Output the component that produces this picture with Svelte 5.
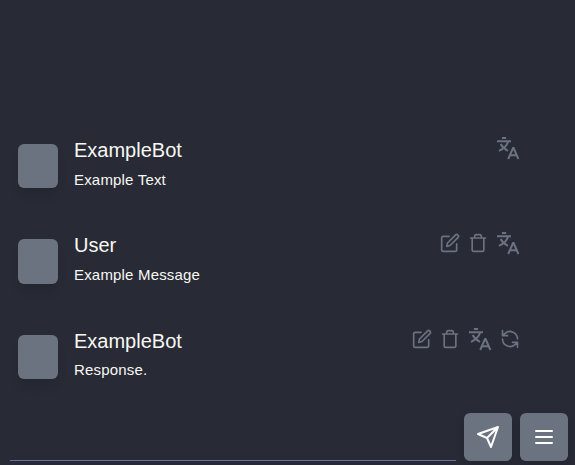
<script>
  const messages = [
    { name: 'ExampleBot', text: 'Example Text', actions: ['translate'] },
    { name: 'User', text: 'Example Message', actions: ['edit', 'trash', 'translate'] },
    { name: 'ExampleBot', text: 'Response.', actions: ['edit', 'trash', 'translate', 'refresh'] }
  ];
</script>

<main class="chat">
  <section class="messages">
    {#each messages as message}
      <article class="message">
        <div class="avatar"></div>
        <div class="content">
          <header>
            <span class="name">{message.name}</span>
            <div class="actions">
              {#each message.actions as action}
                <button class="action {action}" aria-label={action}>
                  {#if action === 'edit'}
                    <svg viewBox="0 0 24 24" width="20" height="20">
                      <path d="M11 4H4a2 2 0 0 0-2 2v14a2 2 0 0 0 2 2h14a2 2 0 0 0 2-2v-7" />
                      <path d="M18.5 2.5a2.12 2.12 0 0 1 3 3L12 15l-4 1 1-4Z" />
                    </svg>
                  {:else if action === 'trash'}
                    <svg viewBox="0 0 24 24" width="20" height="20">
                      <path d="M3 6h18M19 6v14a2 2 0 0 1-2 2H7a2 2 0 0 1-2-2V6M8 6V4a2 2 0 0 1 2-2h4a2 2 0 0 1 2 2v2" />
                    </svg>
                  {:else if action === 'translate'}
                    <svg viewBox="0 0 24 24" width="24" height="24">
                      <path d="M1 5.2h14M5.9 1.9h4.2M12.2 5.2C11 9.4 8 12.6 3 14.8M4.7 8c1.5 3 4 5.2 7.3 6.8M12.2 23l4.8-11h.6L22.4 23M13.9 19.3h6.9" />
                    </svg>
                  {:else}
                    <svg viewBox="0 0 24 24" width="20" height="20">
                      <path d="M3 2v6h6M21 12A9 9 0 0 0 6 5.3L3 8M21 22v-6h-6M3 12a9 9 0 0 0 15 6.7l3-2.7" />
                    </svg>
                  {/if}
                </button>
              {/each}
            </div>
          </header>
          <p>{message.text}</p>
        </div>
      </article>
    {/each}
  </section>
  <footer>
    <input aria-label="Message" />
    <button class="square" aria-label="Send">
      <svg viewBox="0 0 24 24" width="24" height="24">
        <path d="M22 2 11 13M22 2l-7 20-4-9-9-4Z" />
      </svg>
    </button>
    <button class="square" aria-label="Menu">
      <svg viewBox="0 0 24 24" width="24" height="24">
        <path d="M4 6h16M4 12h16M4 18h16" />
      </svg>
    </button>
  </footer>
</main>

<style>
  :global(body) { margin: 0; background: #282a36; }
  .chat {
    box-sizing: border-box;
    height: 465px;
    padding: 0 7px 4px 10px;
    display: flex;
    flex-direction: column;
    justify-content: flex-end;
    background: #282a36;
    color: #f8f8f2;
    font-family: "Liberation Sans", Arial, sans-serif;
    overflow: hidden;
  }
  button { border: 0; padding: 0; margin: 0; background: none; display: flex; align-items: center; justify-content: center; }
  svg { fill: none; stroke: currentColor; stroke-width: 2; stroke-linecap: round; stroke-linejoin: round; display: block; }
  .messages { margin-bottom: -9px; }
  .message { display: flex; height: 95.4px; padding: 0 48px 0 8px; }
  .avatar { width: 40px; height: 44.5px; margin: 8px 16px 0 0; border-radius: 6px; background: #6b7280; box-shadow: 0 8px 12px -3px #0002; flex: none; }
  .content { flex: 1; min-width: 0; }
  header { display: flex; justify-content: space-between; height: 28px; }
  .name { font-size: 20px; line-height: 28px; }
  p { margin: 3.7px 0 0; font-size: 15px; line-height: 24px; letter-spacing: 0.18px; }
  .actions { display: flex; gap: 8px; height: 24px; color: #6b7280; }
  .action { color: inherit; height: 24px; }
  .translate svg { stroke-linecap: butt; stroke-linejoin: miter; }
  footer { display: flex; gap: 8px; align-items: stretch; height: 48px; }
  input { flex: 1; min-width: 0; height: 48px; box-sizing: border-box; padding: 0; border: 0; border-bottom: 1px solid #6272a4; background: transparent; color: inherit; outline: 0; }
  .square { width: 48px; height: 48px; border-radius: 6px; background: #6b7280; color: #fff; flex: none; box-shadow: 0 4px 8px #0002; }
</style>
